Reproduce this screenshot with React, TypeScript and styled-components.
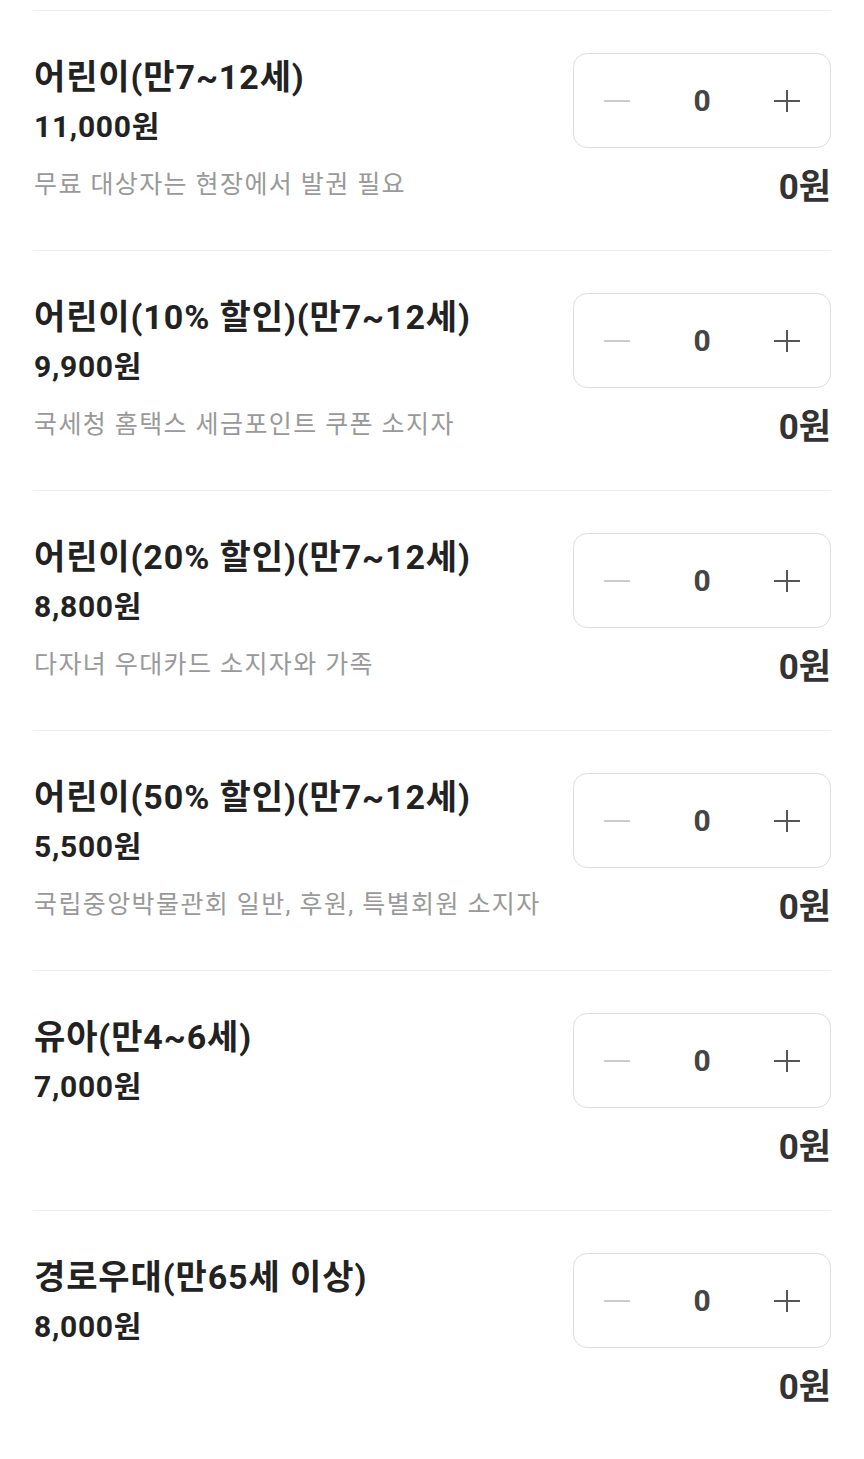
import styled, { createGlobalStyle } from 'styled-components';

interface Ticket {
  name: string;
  price: number;
  note?: string;
}

const tickets: Ticket[] = [
  { name: '어린이(만7~12세)', price: 11000, note: '무료 대상자는 현장에서 발권 필요' },
  { name: '어린이(10% 할인)(만7~12세)', price: 9900, note: '국세청 홈택스 세금포인트 쿠폰 소지자' },
  { name: '어린이(20% 할인)(만7~12세)', price: 8800, note: '다자녀 우대카드 소지자와 가족' },
  { name: '어린이(50% 할인)(만7~12세)', price: 5500, note: '국립중앙박물관회 일반, 후원, 특별회원 소지자' },
  { name: '유아(만4~6세)', price: 7000 },
  { name: '경로우대(만65세 이상)', price: 8000 },
];

const won = (n: number) => `${n.toLocaleString('en-US')}원`;

const App = () => {
  return (
    <>
      <GlobalStyle />
      <List>
        {tickets.map(t => (
          <Row key={t.name}>
            <Info>
              <Title>{t.name}</Title>
              <Price>{won(t.price)}</Price>
              {t.note && <Note>{t.note}</Note>}
            </Info>
            <Side>
              <Stepper>
                <StepButton aria-label="minus" $disabled>
                  <svg width="26" height="24" viewBox="0 0 26 24">
                    <path d="M0 12h26" stroke="currentColor" strokeWidth="2" />
                  </svg>
                </StepButton>
                <Count>0</Count>
                <StepButton aria-label="plus">
                  <svg width="26" height="24" viewBox="0 0 26 24">
                    <path d="M0 12h26M13 1v22" stroke="currentColor" strokeWidth="2" />
                  </svg>
                </StepButton>
              </Stepper>
              <Total>0원</Total>
            </Side>
          </Row>
        ))}
      </List>
    </>
  );
};

const GlobalStyle = createGlobalStyle`
  body {
    margin: 0;
    background: #fff;
    font-family: Roboto, "Noto Sans CJK KR", sans-serif;
  }
`;

const List = styled.main`
  padding: 10px 33px 0;
`;

const Row = styled.section`
  display: flex;
  justify-content: space-between;
  height: 239px;
  border-top: 1px solid #eeeeee;
`;

const Info = styled.div`
  display: flex;
  flex-direction: column;
  padding: 46px 0 0 1px;
`;

const Title = styled.p`
  margin: 0;
  font-size: 34px;
  line-height: 40px;
  font-weight: 700;
  color: #222;
  letter-spacing: 0.9px;
`;

const Price = styled.p`
  margin: 12px 0 0;
  font-size: 30px;
  line-height: 36px;
  font-weight: 700;
  color: #222;
  letter-spacing: 0.7px;
`;

const Note = styled.p`
  margin: 24px 0 0;
  font-size: 25px;
  line-height: 32px;
  color: #999;
  letter-spacing: 1.4px;
`;

const Side = styled.div`
  display: flex;
  flex-direction: column;
  align-items: flex-end;
  padding-top: 42px;
`;

const Stepper = styled.div`
  display: grid;
  grid-template-columns: repeat(3, 1fr);
  align-items: center;
  width: 258px;
  height: 95px;
  box-sizing: border-box;
  border: 1.5px solid #dddddd;
  border-radius: 14px;
`;

const StepButton = styled.span<{ $disabled?: boolean }>`
  display: flex;
  justify-content: center;
  align-items: center;
  color: ${props => (props.$disabled ? '#cccccc' : '#555555')};
`;

const Count = styled.span`
  text-align: center;
  font-size: 30px;
  font-weight: 700;
  color: #444;
`;

const Total = styled.p`
  margin: 19px 0 0;
  font-size: 35px;
  line-height: 42px;
  font-weight: 700;
  color: #333;
`;

export default App;
